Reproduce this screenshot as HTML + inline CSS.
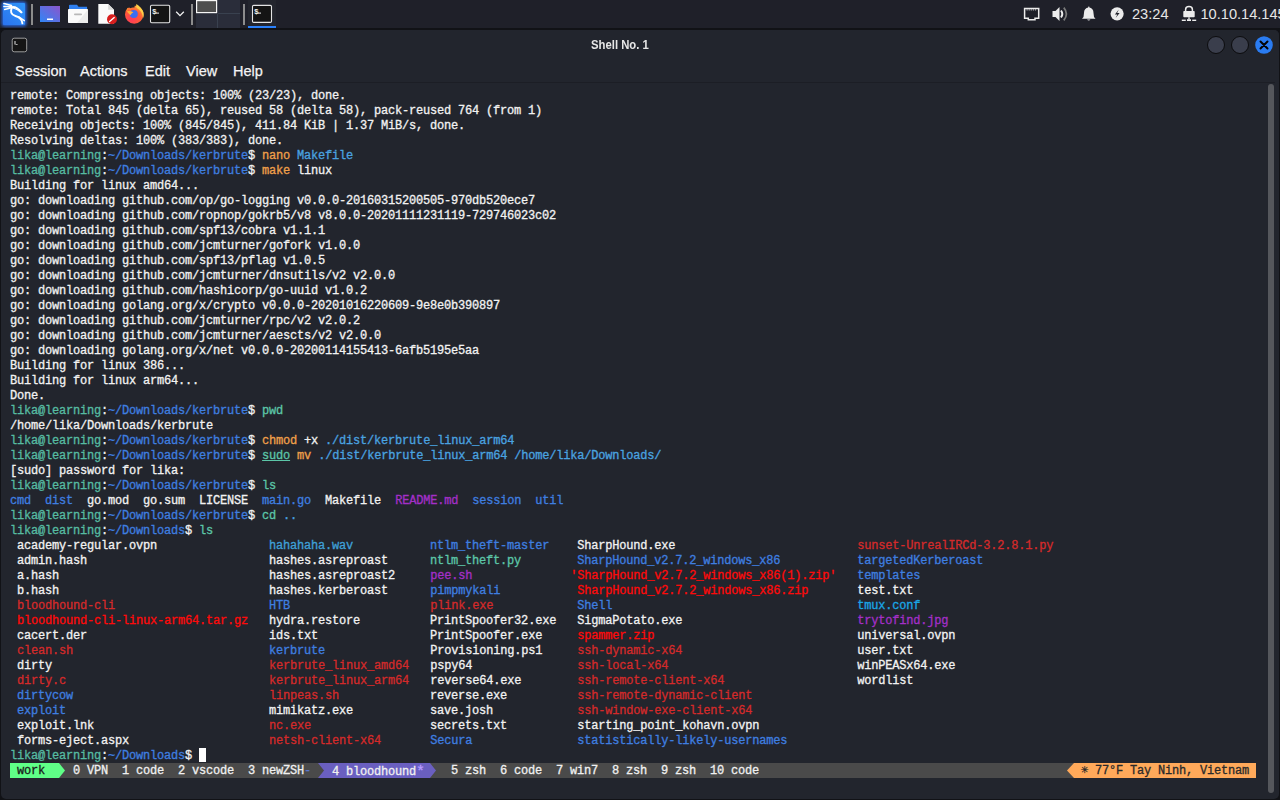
<!DOCTYPE html>
<html><head><meta charset="utf-8">
<style>
*{margin:0;padding:0;box-sizing:border-box}
html,body{width:1280px;height:800px;overflow:hidden;background:#111216}
body{position:relative;font-family:"Liberation Sans",sans-serif}
.abs{position:absolute}
#taskbar{position:absolute;left:0;top:0;width:1280px;height:28px;background:#1f2029}
#win{position:absolute;left:1px;top:30px;width:1278px;height:769px;background:#22252d;border-radius:5px;overflow:hidden}
#title{position:absolute;left:0;top:0;width:100%;height:29px;background:#22252d}
#title .t{position:absolute;left:0;width:100%;top:7px;font-weight:bold;font-size:13px;transform:scaleX(0.87);transform-origin:0 0;color:#e6e6e6}
.menu{position:absolute;top:33px;font-size:14.5px;color:#f4f4f4;-webkit-text-stroke:0.25px #f4f4f4}
#sep{position:absolute;left:0;top:52px;width:1274px;height:1px;background:#1c1e25}
#term{position:absolute;left:0;top:0;width:1280px;height:800px;font-family:"Liberation Mono",monospace;font-size:12px;color:#f2f2f2}
.ln{position:absolute;left:10px;height:15px;line-height:15px;white-space:pre;letter-spacing:-0.2px;font-weight:normal;-webkit-text-stroke:0.3px currentColor}
.cur{display:inline-block;width:7px;height:14px;background:#ffffff;vertical-align:top;position:relative;top:-1px}
#scroll{position:absolute;left:1268px;top:84px;width:6px;height:709px;border-radius:3px;background:#55575c}
.st{position:absolute;top:764px;height:15px;line-height:15px;font-family:"Liberation Mono",monospace;font-size:12px;white-space:pre;letter-spacing:-0.2px;font-weight:normal;-webkit-text-stroke:0.3px currentColor}
</style></head><body>
<div id="taskbar">
<svg class="abs" style="left:0;top:0" width="300" height="28">
<defs>
<filter id="glow" x="-50%" y="-50%" width="200%" height="200%"><feGaussianBlur stdDeviation="1.6"/></filter>
<linearGradient id="kg" x1="0" y1="1" x2="1" y2="0"><stop offset="0" stop-color="#2b74f0"/><stop offset="1" stop-color="#2f95f8"/></linearGradient>
<linearGradient id="dg" x1="0" y1="1" x2="1" y2="0"><stop offset="0" stop-color="#2f86f6"/><stop offset="1" stop-color="#8c55cc"/></linearGradient>
<radialGradient id="ffg" cx="0.35" cy="0.75" r="0.9"><stop offset="0" stop-color="#ff3a5a"/><stop offset="0.55" stop-color="#ff5a36"/><stop offset="1" stop-color="#ffc040"/></radialGradient>
</defs>
<rect x="1.5" y="1.5" width="25" height="25" rx="3" fill="#2a6ff0" opacity="0.9" filter="url(#glow)"/>
<rect x="3" y="3" width="22" height="22" rx="1" fill="url(#kg)"/>
<g stroke="#fff" stroke-linecap="round" fill="none">
<path d="M3.9 3.6 L11.5 5.6 M3.9 6.5 L11.5 6.7 M4.6 9.4 L11.5 7.7" stroke-width="1.5"/>
<path d="M11.5 7.2 Q16 5.8 21.6 12.3" stroke-width="1.9"/><path d="M13 8 Q17 9 21 12.5" stroke-width="1.2"/>
<path d="M12 7.8 C10 11 10.8 14.6 15.5 16 C19.5 17.2 22.2 20 22.4 23.4" stroke-width="1.9"/>
<path d="M18.8 16.8 L24.3 20.6" stroke-width="1.5"/>
</g>
<rect x="31" y="4" width="2" height="21" fill="#8c8c8c"/>
<rect x="40" y="6" width="20" height="16" fill="url(#dg)"/>
<rect x="47" y="18.5" width="6" height="1.5" fill="#fff"/>
<path d="M69 8.9 L69 5.5 Q69 4.7 70 4.7 L77 4.7 L78.5 6.8 L87 6.8 L87.2 8.9 Z" fill="#2f7ff0"/>
<rect x="68" y="8.9" width="20" height="14.1" rx="0.8" fill="#fafafa"/>
<path d="M88 9.5 L88 23 L77 23 Z" fill="#ececec"/>
<rect x="74" y="13.4" width="8" height="1.8" rx="0.9" fill="#b8b8b8"/>
<path d="M98.3 4 L108.2 4 L114 9.8 L114 23.7 L98.3 23.7 Z" fill="#fafafa"/>
<path d="M108.2 4 L108.2 9.8 L114 9.8 Z" fill="#d8d8d8"/>
<circle cx="112" cy="19.2" r="5" fill="#d81e1e"/>
<path d="M109.6 21.5 L114.2 17.4" stroke="#fff" stroke-width="1.3" stroke-linecap="round"/>
<circle cx="134.2" cy="14.6" r="9.2" fill="url(#ffg)"/>
<path d="M124 9.5 Q125.5 6 128 5.5 L127.6 7.8 Q129.5 7.2 130.4 8.3 Q132 7 134.5 7.6 Q134 5.2 136.4 4 L131 3 L123 3 Z" fill="#1f2029"/>
<path d="M136.4 4 Q141.5 7 143.6 12.5 Q144 16 143.2 18 Q142 11 137.5 8.6 Q135.5 7.2 136.4 4 Z" fill="#ffcf48"/>
<circle cx="133.8" cy="14.1" r="4" fill="#3a6ef2"/>
<path d="M126.8 11.3 Q129.5 10.2 133.4 12.2 Q131.4 13.3 130.4 15.2 Q128.2 13.3 126.8 11.3 Z" fill="#ffb03a"/>
<path d="M127.4 7.8 Q128.5 8.8 128.2 10.5 L126.4 10.8 Z M130.4 8.3 Q131.2 9.3 130.5 10.5 L129 10.3 Z" fill="#ff8a30"/>
<rect x="150.5" y="5.2" width="19.2" height="17.6" rx="1.2" fill="#141414" stroke="#e4e4e4" stroke-width="1.1"/>
<text x="152.2" y="13.6" font-family="Liberation Sans" font-weight="bold" font-size="7.5" fill="#f0f0f0">$</text>
<rect x="156" y="12.6" width="3" height="1" fill="#f0f0f0"/>
<path d="M176.2 11.8 L180 15.6 L183.8 11.8" stroke="#f2f2f2" stroke-width="1.3" fill="none"/>
<rect x="191" y="4" width="2" height="21" fill="#8c8c8c"/>
<rect x="196" y="0" width="44" height="28" fill="#2a2d3a"/>
<rect x="218" y="13" width="22" height="1" fill="#39414f"/>
<rect x="217" y="14" width="1" height="14" fill="#39414f"/>
<rect x="196.6" y="0.6" width="20" height="12" fill="#4e4e4e" stroke="#f6f6f6" stroke-width="1.2"/>
<rect x="243" y="4" width="2" height="21" fill="#8c8c8c"/>
<rect x="248" y="0" width="28" height="28" fill="#23252d"/>
<rect x="252.5" y="5.4" width="19" height="17" rx="1.2" fill="#141414" stroke="#e4e4e4" stroke-width="1.1"/>
<text x="254.2" y="13.6" font-family="Liberation Sans" font-weight="bold" font-size="7.5" fill="#f0f0f0">$</text>
<rect x="258" y="12.6" width="3" height="1" fill="#f0f0f0"/>
<rect x="248" y="26" width="28" height="2" fill="#2a80fa"/>
</svg>
<svg class="abs" style="left:1000px;top:0" width="280" height="28">
<g fill="none" stroke="#ececec">
<path d="M24.6 8.4 H38.7 V18.2 H35 V19.8 H28.3 V18.2 H24.6 Z" stroke-width="1.5"/>
<path d="M26.5 9.9 H37" stroke-width="0.9" stroke-dasharray="1.2 0.9"/>
</g>
<path d="M52.5 11 H55.5 L59.5 7 V21 L55.5 17 H52.5 Z" fill="#ececec"/>
<path d="M61 10.5 Q63.6 14 61 17.5" stroke="#ececec" stroke-width="2" fill="none"/>
<path d="M63.8 7.6 Q69 14 63.8 20.4" stroke="#7a7a7a" stroke-width="1.7" fill="none"/>
<path d="M89 7.5 Q93.5 8 93.5 13 L94 17 L95.5 18.8 H82 L83.5 17 L84 13 Q84 8 88.5 7.5 Z" fill="#ececec"/>
<rect x="88" y="6.5" width="1.6" height="1.6" rx="0.8" fill="#ececec"/>
<path d="M87 19.6 Q88.75 21.4 90.5 19.6 Z" fill="#ececec"/>
<circle cx="117.1" cy="13.8" r="6.6" fill="#ececec"/>
<path d="M118.8 9.6 L114.9 14.6 H117.3 L115.6 18 L119.6 12.9 H117.1 Z" fill="#1f2029"/>
<text x="132" y="19" font-family="Liberation Sans" font-size="14.6" fill="#e6e6e6">23:24</text>
<path d="M185.6 11.3 V9.4 Q185.6 6.6 189 6.6 Q192.4 6.6 192.4 9.4 V11.3" stroke="#ececec" stroke-width="1.5" fill="none"/>
<rect x="183.3" y="11" width="11.4" height="6.3" rx="0.8" fill="#ececec"/>
<rect x="188.3" y="17.3" width="1.4" height="2" fill="#ececec"/>
<rect x="181.8" y="19.6" width="4" height="1.4" fill="#ececec"/><rect x="187" y="19.2" width="4" height="1.8" fill="#ececec"/><rect x="192.2" y="19.6" width="4" height="1.4" fill="#ececec"/>
<text x="200.5" y="19" font-family="Liberation Sans" font-size="14.6" fill="#e6e6e6">10.10.14.145</text>
</svg>
</div>
<div id="win">
  <div id="title"><div class="t" style="left:590px;width:auto">Shell No. 1</div></div>
  <svg class="abs" style="left:0;top:0" width="1277" height="30">
   <rect x="11.2" y="8.2" width="14.5" height="13.6" rx="2" fill="#151515" stroke="#9a9a9a" stroke-width="1"/>
   <path d="M14 11 V14.5" stroke="#e8e8e8" stroke-width="1"/><rect x="14.6" y="14" width="2" height="0.8" fill="#cfcfcf"/>
   <circle cx="1215" cy="15" r="8.5" fill="#3a3e4c" stroke="#0c0c0e" stroke-width="1"/>
   <circle cx="1239" cy="15" r="8.5" fill="#3a3e4c" stroke="#0c0c0e" stroke-width="1"/>
   <circle cx="1263" cy="15" r="8.8" fill="#2a7cf2"/>
   <path d="M1259.5 11.5 L1266.5 18.5 M1266.5 11.5 L1259.5 18.5" stroke="#050505" stroke-width="2" stroke-linecap="round"/>
  </svg>
  <div class="menu" style="left:14px">Session</div>
  <div class="menu" style="left:79px">Actions</div>
  <div class="menu" style="left:144px">Edit</div>
  <div class="menu" style="left:185px">View</div>
  <div class="menu" style="left:232px">Help</div>
  <div id="sep"></div>
</div>
<div id="term">
<div class="ln" style="top:89px">remote: Compressing objects: 100% (23/23), done.</div>
<div class="ln" style="top:104px">remote: Total 845 (delta 65), reused 58 (delta 58), pack-reused 764 (from 1)</div>
<div class="ln" style="top:119px">Receiving objects: 100% (845/845), 411.84 KiB | 1.37 MiB/s, done.</div>
<div class="ln" style="top:134px">Resolving deltas: 100% (383/383), done.</div>
<div class="ln" style="top:149px"><span style="color:#56bca2;">lika@learning</span><span style="color:#f2f2f2;">:</span><span style="color:#3f7fe0;">~/Downloads/kerbrute</span><span style="color:#f2f2f2;">$ </span><span style="color:#f0a04a;">nano</span> <span style="color:#4aa3e0;">Makefile</span></div>
<div class="ln" style="top:164px"><span style="color:#56bca2;">lika@learning</span><span style="color:#f2f2f2;">:</span><span style="color:#3f7fe0;">~/Downloads/kerbrute</span><span style="color:#f2f2f2;">$ </span><span style="color:#f0a04a;">make</span> linux</div>
<div class="ln" style="top:179px">Building for linux amd64...</div>
<div class="ln" style="top:194px">go: downloading github.com/op/go-logging v0.0.0-20160315200505-970db520ece7</div>
<div class="ln" style="top:209px">go: downloading github.com/ropnop/gokrb5/v8 v8.0.0-20201111231119-729746023c02</div>
<div class="ln" style="top:224px">go: downloading github.com/spf13/cobra v1.1.1</div>
<div class="ln" style="top:239px">go: downloading github.com/jcmturner/gofork v1.0.0</div>
<div class="ln" style="top:254px">go: downloading github.com/spf13/pflag v1.0.5</div>
<div class="ln" style="top:269px">go: downloading github.com/jcmturner/dnsutils/v2 v2.0.0</div>
<div class="ln" style="top:284px">go: downloading github.com/hashicorp/go-uuid v1.0.2</div>
<div class="ln" style="top:299px">go: downloading golang.org/x/crypto v0.0.0-20201016220609-9e8e0b390897</div>
<div class="ln" style="top:314px">go: downloading github.com/jcmturner/rpc/v2 v2.0.2</div>
<div class="ln" style="top:329px">go: downloading github.com/jcmturner/aescts/v2 v2.0.0</div>
<div class="ln" style="top:344px">go: downloading golang.org/x/net v0.0.0-20200114155413-6afb5195e5aa</div>
<div class="ln" style="top:359px">Building for linux 386...</div>
<div class="ln" style="top:374px">Building for linux arm64...</div>
<div class="ln" style="top:389px">Done.</div>
<div class="ln" style="top:404px"><span style="color:#56bca2;">lika@learning</span><span style="color:#f2f2f2;">:</span><span style="color:#3f7fe0;">~/Downloads/kerbrute</span><span style="color:#f2f2f2;">$ </span><span style="color:#5cc6a8;">pwd</span></div>
<div class="ln" style="top:419px">/home/lika/Downloads/kerbrute</div>
<div class="ln" style="top:434px"><span style="color:#56bca2;">lika@learning</span><span style="color:#f2f2f2;">:</span><span style="color:#3f7fe0;">~/Downloads/kerbrute</span><span style="color:#f2f2f2;">$ </span><span style="color:#f0a04a;">chmod</span> +x <span style="color:#4aa3e0;">./dist/kerbrute_linux_arm64</span></div>
<div class="ln" style="top:449px"><span style="color:#56bca2;">lika@learning</span><span style="color:#f2f2f2;">:</span><span style="color:#3f7fe0;">~/Downloads/kerbrute</span><span style="color:#f2f2f2;">$ </span><span style="color:#5cc6a8;text-decoration:underline;">sudo</span> <span style="color:#f0a04a;">mv</span> <span style="color:#4aa3e0;">./dist/kerbrute_linux_arm64</span> <span style="color:#4aa3e0;">/home/lika/Downloads/</span></div>
<div class="ln" style="top:464px">[sudo] password for lika:</div>
<div class="ln" style="top:479px"><span style="color:#56bca2;">lika@learning</span><span style="color:#f2f2f2;">:</span><span style="color:#3f7fe0;">~/Downloads/kerbrute</span><span style="color:#f2f2f2;">$ </span><span style="color:#5cc6a8;">ls</span></div>
<div class="ln" style="top:494px"><span style="color:#3f7fe0;">cmd</span>  <span style="color:#3f7fe0;">dist</span>  go.mod  go.sum  LICENSE  <span style="color:#3f7fe0;">main.go</span>  Makefile  <span style="color:#a42fc8;">README.md</span>  <span style="color:#3f7fe0;">session</span>  <span style="color:#3f7fe0;">util</span></div>
<div class="ln" style="top:509px"><span style="color:#56bca2;">lika@learning</span><span style="color:#f2f2f2;">:</span><span style="color:#3f7fe0;">~/Downloads/kerbrute</span><span style="color:#f2f2f2;">$ </span><span style="color:#5cc6a8;">cd</span> <span style="color:#4aa3e0;">..</span></div>
<div class="ln" style="top:524px"><span style="color:#56bca2;">lika@learning</span><span style="color:#f2f2f2;">:</span><span style="color:#3f7fe0;">~/Downloads</span><span style="color:#f2f2f2;">$ </span><span style="color:#5cc6a8;">ls</span></div>
<div class="ln" style="top:539px"> <span style="color:#f2f2f2;">academy-regular.ovpn</span>                <span style="color:#3fa0d8;">hahahaha.wav</span>           <span style="color:#3f7fe0;">ntlm_theft-master</span>    <span style="color:#f2f2f2;">SharpHound.exe</span>                          <span style="color:#d42a2a;">sunset-UnrealIRCd-3.2.8.1.py</span></div>
<div class="ln" style="top:554px"> <span style="color:#f2f2f2;">admin.hash</span>                          <span style="color:#f2f2f2;">hashes.asreproast</span>      <span style="color:#5cc6a8;">ntlm_theft.py</span>        <span style="color:#3f7fe0;">SharpHound_v2.7.2_windows_x86</span>           <span style="color:#3f7fe0;">targetedKerberoast</span></div>
<div class="ln" style="top:569px"> <span style="color:#f2f2f2;">a.hash</span>                              <span style="color:#f2f2f2;">hashes.asreproast2</span>     <span style="color:#a42fc8;">pee.sh</span>              <span style="color:#ff0a0a;">&#x27;SharpHound_v2.7.2_windows_x86(1).zip&#x27;</span>   <span style="color:#3f7fe0;">templates</span></div>
<div class="ln" style="top:584px"> <span style="color:#f2f2f2;">b.hash</span>                              <span style="color:#f2f2f2;">hashes.kerberoast</span>      <span style="color:#3f7fe0;">pimpmykali</span>           <span style="color:#ff0a0a;">SharpHound_v2.7.2_windows_x86.zip</span>       <span style="color:#f2f2f2;">test.txt</span></div>
<div class="ln" style="top:599px"> <span style="color:#d42a2a;">bloodhound-cli</span>                      <span style="color:#3f7fe0;">HTB</span>                    <span style="color:#d42a2a;">plink.exe</span>            <span style="color:#3f7fe0;">Shell</span>                                   <span style="color:#1aa6e6;">tmux.conf</span></div>
<div class="ln" style="top:614px"> <span style="color:#ff0a0a;">bloodhound-cli-linux-arm64.tar.gz</span>   <span style="color:#f2f2f2;">hydra.restore</span>          <span style="color:#f2f2f2;">PrintSpoofer32.exe</span>   <span style="color:#f2f2f2;">SigmaPotato.exe</span>                         <span style="color:#a42fc8;">trytofind.jpg</span></div>
<div class="ln" style="top:629px"> <span style="color:#f2f2f2;">cacert.der</span>                          <span style="color:#f2f2f2;">ids.txt</span>                <span style="color:#f2f2f2;">PrintSpoofer.exe</span>     <span style="color:#ff0a0a;">spammer.zip</span>                             <span style="color:#f2f2f2;">universal.ovpn</span></div>
<div class="ln" style="top:644px"> <span style="color:#d42a2a;">clean.sh</span>                            <span style="color:#3f7fe0;">kerbrute</span>               <span style="color:#f2f2f2;">Provisioning.ps1</span>     <span style="color:#d42a2a;">ssh-dynamic-x64</span>                         <span style="color:#f2f2f2;">user.txt</span></div>
<div class="ln" style="top:659px"> <span style="color:#f2f2f2;">dirty</span>                               <span style="color:#d42a2a;">kerbrute_linux_amd64</span>   <span style="color:#f2f2f2;">pspy64</span>               <span style="color:#d42a2a;">ssh-local-x64</span>                           <span style="color:#f2f2f2;">winPEASx64.exe</span></div>
<div class="ln" style="top:674px"> <span style="color:#d42a2a;">dirty.c</span>                             <span style="color:#d42a2a;">kerbrute_linux_arm64</span>   <span style="color:#f2f2f2;">reverse64.exe</span>        <span style="color:#d42a2a;">ssh-remote-client-x64</span>                   <span style="color:#f2f2f2;">wordlist</span></div>
<div class="ln" style="top:689px"> <span style="color:#3f7fe0;">dirtycow</span>                            <span style="color:#d42a2a;">linpeas.sh</span>             <span style="color:#f2f2f2;">reverse.exe</span>          <span style="color:#d42a2a;">ssh-remote-dynamic-client</span></div>
<div class="ln" style="top:704px"> <span style="color:#3f7fe0;">exploit</span>                             <span style="color:#f2f2f2;">mimikatz.exe</span>           <span style="color:#f2f2f2;">save.josh</span>            <span style="color:#d42a2a;">ssh-window-exe-client-x64</span></div>
<div class="ln" style="top:719px"> <span style="color:#f2f2f2;">exploit.lnk</span>                         <span style="color:#d42a2a;">nc.exe</span>                 <span style="color:#f2f2f2;">secrets.txt</span>          <span style="color:#f2f2f2;">starting_point_kohavn.ovpn</span></div>
<div class="ln" style="top:734px"> <span style="color:#f2f2f2;">forms-eject.aspx</span>                    <span style="color:#d42a2a;">netsh-client-x64</span>       <span style="color:#3f7fe0;">Secura</span>               <span style="color:#3f7fe0;">statistically-likely-usernames</span></div>
<div class="ln" style="top:749px"><span style="color:#56bca2;">lika@learning</span><span style="color:#f2f2f2;">:</span><span style="color:#3f7fe0;">~/Downloads</span><span style="color:#f2f2f2;">$ </span><span class="cur"></span></div>

</div>
<div id="scroll"></div>
<!-- status bar -->
<div class="abs" style="left:10px;top:763px;width:1064px;height:15px;background:#4a4a4a"></div>
<div class="abs" style="left:10px;top:763px;width:49px;height:15px;background:#5fff87"></div>
<svg class="abs" style="left:59px;top:763px" width="7" height="15"><polygon points="0,0 6,7.5 0,15" fill="#5fff87"/></svg>
<div class="st" style="left:17px;color:#1a1a1a">work</div>
<div class="st" style="left:73px;color:#f0f0f0">0 VPN  1 code  2 vscode  3 newZSH<span style="color:#5a78d0">-</span></div>
<svg class="abs" style="left:318px;top:763px" width="119" height="15"><polygon points="0,0 112,0 118,7.5 112,15 0,15 6,7.5" fill="#6a5fc0"/></svg>
<div class="st" style="left:332px;color:#f0f0f0">4 bloodhound<span style="color:#b89cff;font-size:15px;letter-spacing:0;position:relative;top:1px">*</span></div>
<div class="st" style="left:451px;color:#f0f0f0">5 zsh  6 code  7 win7  8 zsh  9 zsh  10 code</div>
<svg class="abs" style="left:1067px;top:763px" width="190" height="15"><polygon points="0,7.5 7,0 189,0 189,15 7,15" fill="#ffa95a"/></svg>
<div class="st" style="left:1081px;color:#2a2a2a">☀ 77°F Tay Ninh, Vietnam</div>
</body></html>
